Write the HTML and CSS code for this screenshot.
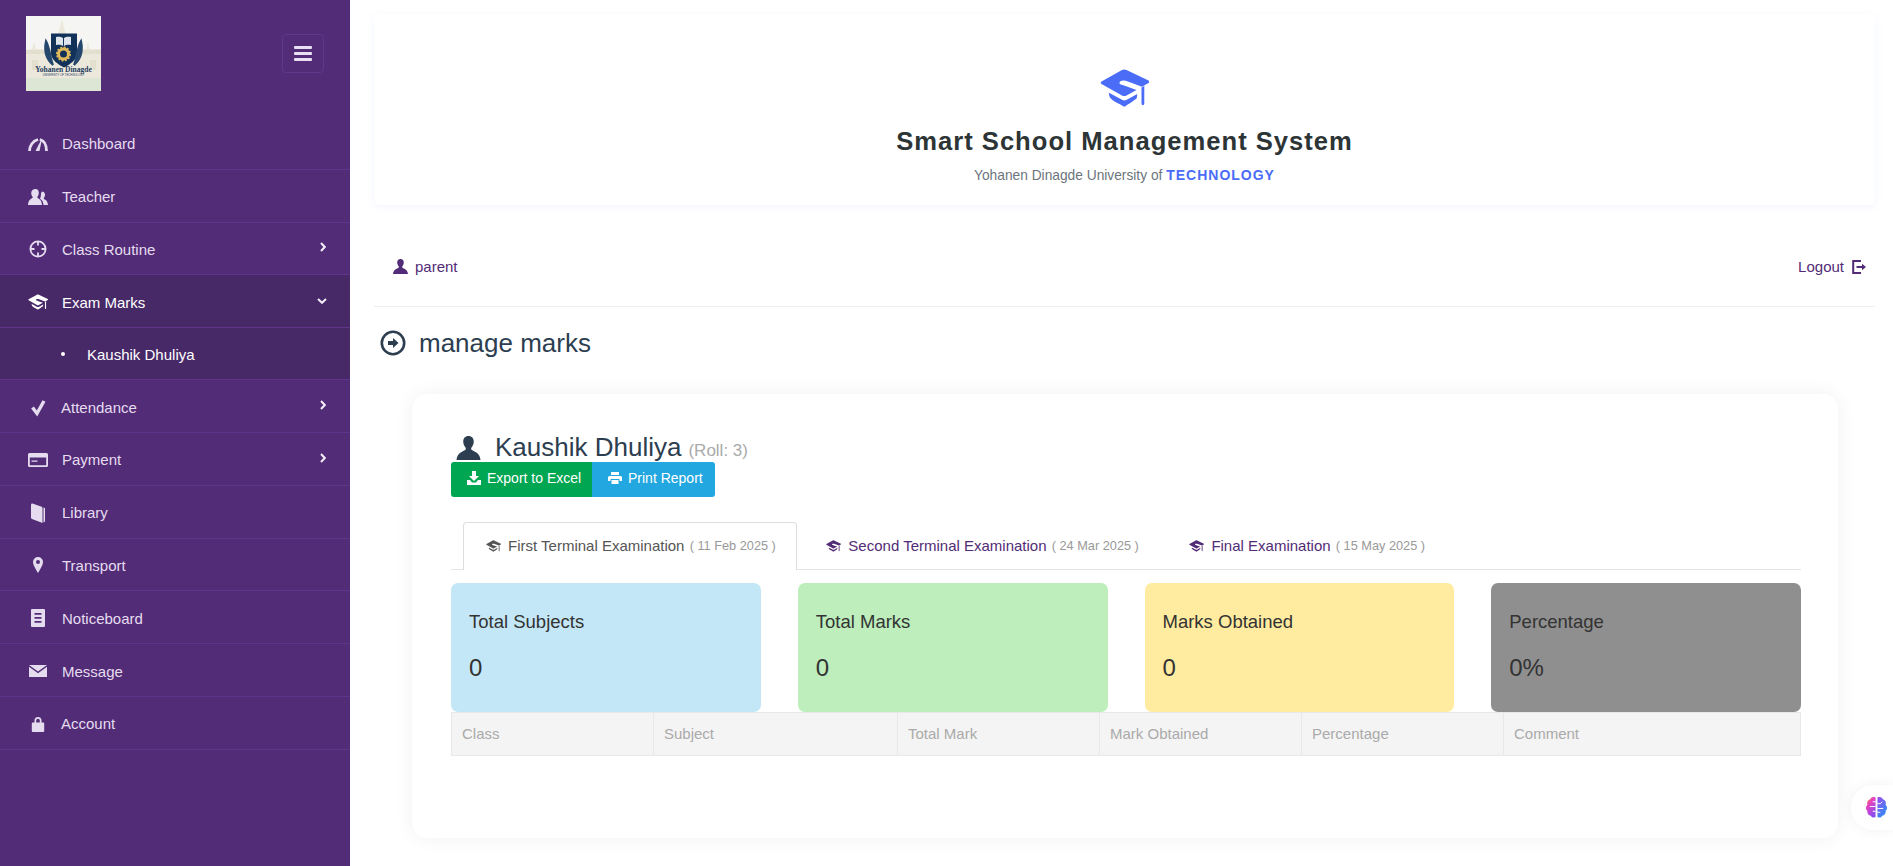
FILE: index.html
```html
<!DOCTYPE html>
<html lang="en">
<head>
  <meta charset="UTF-8" />
  <title>Manage Marks</title>
  <link rel="stylesheet" href="styles.css">
</head>
<body>
  <svg class="sprite" width="0" height="0">
    <defs>
      <symbol id="i-cap" viewBox="0 0 49 38">
        <path d="M22 1 1.500 12.500c-1 .8-1 1.700 0 2.500L22 26.500c1.500.8 3 .8 4.500 0l10-5.500-11-4c-2-.7-4-1-5.500-2-1.200-1-.3-3 2-3.300 2-.3 4 .2 6.500 1l13.500 5 6.500-3.700c1-.8 1-1.700 0-2.500L26.500 1C25 .2 23.500.2 22 1z"/>
        <path d="M8.500 23.500 22.500 31c1.300.6 2.500.6 3.800 0l11-6-.5 4c-.8 1.500-8 5.800-11 8-1 .7-2 .7-3 0-4-2.500-10-5-12.500-8-1-1.500-1.500-3.500-1.300-5.500z"/>
        <path d="M41.500 18.500l2.800-1.500v16.500c0 2-.3 2.500-1.400 2.500s-1.400-.5-1.400-2.500z"/>
      </symbol>
      <symbol id="i-user" viewBox="0 0 16 16"><path d="M8 0c2.300 0 3.500 1.600 3.500 3.700 0 1.500-.6 3-1.500 4-.3.400-.3 1.300.2 1.700C11.800 10.500 15.500 11.200 16 16H0c.5-4.800 4.200-5.500 5.800-6.600.5-.4.500-1.300.2-1.700-.9-1-1.500-2.500-1.500-4C4.500 1.600 5.700 0 8 0z"/></symbol>
      <symbol id="i-chev" viewBox="0 0 6 10"><path d="M1 1l3.800 4L1 9" fill="none" stroke="currentColor" stroke-width="2"/></symbol>
    </defs>
  </svg>

  <aside class="sidebar">
    <div class="side-head">
      <div class="logo">
        <svg viewBox="0 0 75 75" width="75" height="75">
          <rect width="75" height="75" fill="#f5f6f3"/>
          <path d="M0 34l6-1 2-7 2 7h14l6-10 3-8 3-12 3 12 3 8 6 10h12l2-7 2 7h11v33H0z" fill="#ece8db"/>
          <path d="M0 34h75v4H0zM6 44h6v10H6zM64 44h6v10h-6z" fill="#e3dfcf"/>
          <path d="M0 62h75v13H0z" fill="#dde5d5"/>
          <path d="M25 17.500h26v20c0 6-7 11-13 14-6-3-13-8-13-14z" fill="#13325a"/>
          <path d="M37 22c-2-1.500-4.500-1.500-7-1v8c2.500-.5 5-.5 7 1zM38 22c2-1.500 4.500-1.500 7-1v8c-2.500-.5-5-.5-7 1z" fill="#dfe5ec"/>
          <circle cx="37.500" cy="38" r="5" fill="none" stroke="#e0b95a" stroke-width="3"/>
          <circle cx="37.500" cy="38" r="6.700" fill="none" stroke="#e0b95a" stroke-width="1.600" stroke-dasharray="2 1.500"/>
          <path d="M20 25c-2 9 0 18 7 24-3-7-3-17-7-24zM55 25c2 9 0 18-7 24 3-7 3-17 7-24z" fill="#25476d" stroke="#25476d" stroke-width="2"/>
          <text x="37.500" y="55.500" class="logo-name">Yohanen Dinagde</text>
          <text x="37.500" y="60" class="logo-sub">UNIVERSITY OF TECHNOLOGY</text>
        </svg>
      </div>
      <button class="toggle" type="button">
        <span></span><span></span><span></span>
      </button>
    </div>

    <nav class="side-nav">
      <a class="nav-item">
        <svg class="nav-icon" viewBox="0 0 20 14"><path d="M1.500 14C1.500 9 4.500 4 10 2.500M11.800 2.500C16 3.500 18.500 8 18.500 14" fill="none" stroke="currentColor" stroke-width="2.800"/><path d="M7.500 14 12.800 3.500l.8.4L11.500 14z" fill="currentColor"/></svg>
        <span>Dashboard</span>
      </a>
      <a class="nav-item">
        <svg class="nav-icon" viewBox="0 0 20 16"><path d="M7.500 0c2.200 0 3.300 1.700 3.300 3.900 0 1.400-.6 2.900-1.300 3.700-.3.400-.2 1.100.1 1.400 1.400 1 4 1.500 4.400 7H0c.4-5.500 3-6 4.400-7 .3-.3.400-1 .1-1.400C3.800 6.800 3.200 5.300 3.200 3.900 3.200 1.700 5.300 0 7.500 0z" fill="currentColor"/><path d="M14 2.500c2 0 3 1.400 3 3.300 0 1.300-.5 2.500-1.200 3.200-.2.300-.1.900.2 1.100 1.200.8 3.600 1.400 4 5.900h-4.500c-.2-2.800-1.200-5-3.500-6.300.6-1 1-2.500 .9-4.200.3-1.800 .7-3 1.600-3z" fill="currentColor"/></svg>
        <span>Teacher</span>
      </a>
      <a class="nav-item">
        <svg class="nav-icon" viewBox="0 0 20 20"><circle cx="10" cy="10" r="7.600" fill="none" stroke="currentColor" stroke-width="1.800"/><path d="M10 2v4.500M10 13.500V18M2 10h4.500M13.500 10H18" stroke="currentColor" stroke-width="1.800"/></svg>
        <span>Class Routine</span>
        <svg class="chevron"><use href="#i-chev"/></svg>
      </a>
      <div class="nav-group">
        <a class="nav-item active">
          <svg class="nav-icon"><use href="#i-cap"/></svg>
          <span>Exam Marks</span>
          <svg class="chevron down"><use href="#i-chev"/></svg>
        </a>
        <a class="nav-sub"><i class="dot"></i><span>Kaushik Dhuliya</span></a>
      </div>
      <a class="nav-item narrow">
        <svg class="nav-icon" viewBox="0 0 20 16"><path d="M4.500 8.500 9 14.500 16 2" fill="none" stroke="currentColor" stroke-width="3.400"/></svg>
        <span>Attendance</span>
        <svg class="chevron"><use href="#i-chev"/></svg>
      </a>
      <a class="nav-item">
        <svg class="nav-icon" viewBox="0 0 20 14"><path d="M1.500 0h17A1.500 1.500 0 0 1 20 1.500v11a1.500 1.500 0 0 1-1.500 1.500h-17A1.500 1.500 0 0 1 0 12.500v-11A1.500 1.500 0 0 1 1.500 0zM1.800 4.500v7.700h16.400V4.500zM3.500 7.500h6v1.300h-6z" fill="currentColor" fill-rule="evenodd"/></svg>
        <span>Payment</span>
        <svg class="chevron"><use href="#i-chev"/></svg>
      </a>
      <a class="nav-item">
        <svg class="nav-icon" viewBox="0 0 20 20"><path d="M3 2c0-1 .6-1.700 1.500-1.500L13 3.500c1 .4 1.500 1 1.500 2V20L4 16c-.7-.3-1-.8-1-1.500z" fill="currentColor"/><path d="M15.500 4.500 17 5v13.500l-1.500 1z" fill="currentColor"/></svg>
        <span>Library</span>
      </a>
      <a class="nav-item">
        <svg class="nav-icon" viewBox="0 0 20 16"><path d="M10 0a5 5 0 0 1 5 5c0 3-3 7.500-5 11-2-3.500-5-8-5-11a5 5 0 0 1 5-5zm0 3a2 2 0 1 0 0 4 2 2 0 0 0 0-4z" fill="currentColor" fill-rule="evenodd"/></svg>
        <span>Transport</span>
      </a>
      <a class="nav-item">
        <svg class="nav-icon" viewBox="0 0 20 18"><path d="M4 0h12a1 1 0 0 1 1 1v16a1 1 0 0 1-1 1H4a1 1 0 0 1-1-1V1a1 1 0 0 1 1-1zm2.500 4v1.700h7V4zm0 4v1.700h7V8zm0 4v1.700h7V12z" fill="currentColor" fill-rule="evenodd"/></svg>
        <span>Noticeboard</span>
      </a>
      <a class="nav-item">
        <svg class="nav-icon" viewBox="0 0 20 12"><path d="M1 0h18l-9 6.500zM1 1.700v10.300h18V1.700L10 8.300z" fill="currentColor"/></svg>
        <span>Message</span>
      </a>
      <a class="nav-item narrow">
        <svg class="nav-icon" viewBox="0 0 20 16"><path d="M6.500 6.500V4.500a3.500 3.500 0 0 1 7 0v2h1.700A1 1 0 0 1 16.200 7.500v7.500a1 1 0 0 1-1 1H4.800a1 1 0 0 1-1-1V7.500a1 1 0 0 1 1-1zm1.700 0h3.600V4.500a1.800 1.800 0 0 0-3.600 0z" fill="currentColor" fill-rule="evenodd"/></svg>
        <span>Account</span>
      </a>
    </nav>
  </aside>

  <main class="content">
    <header class="brand">
      <svg class="brand-icon"><use href="#i-cap"/></svg>
      <h1>Smart School Management System</h1>
      <p>Yohanen Dinagde University of <b>TECHNOLOGY</b></p>
    </header>

    <div class="userbar">
      <a class="userlink">
        <svg class="user-icon"><use href="#i-user"/></svg>
        parent
      </a>
      <a class="userlink">
        Logout
        <svg class="logout-icon" viewBox="0 0 14 14"><path d="M9 1H1.200v12H9" fill="none" stroke="currentColor" stroke-width="2"/><path d="M4.500 6.100h5.500V3.800L14 7l-4 3.200V7.900H4.500z" fill="currentColor"/></svg>
      </a>
    </div>

    <h2 class="page-title">
      <svg class="title-icon" viewBox="0 0 26 26"><circle cx="13" cy="13" r="11.200" fill="none" stroke="currentColor" stroke-width="2.600"/><path d="M8 11h5V8l5.500 5-5.500 5v-3H8z" fill="currentColor"/></svg>
      manage marks
    </h2>

    <section class="card">
      <div class="student">
        <svg class="student-icon"><use href="#i-user"/></svg>
        <span class="student-name">Kaushik Dhuliya</span>
        <small>(Roll: 3)</small>
      </div>
      <div class="actions">
        <button class="btn btn-green" type="button">
          <svg viewBox="0 0 14 14"><path d="M5 0h4v5h3L7 10 2 5h3zM0 9h3l2 2.500h4L11 9h3v5H0z" fill="currentColor"/></svg>
          Export to Excel
        </button>
        <button class="btn btn-blue" type="button">
          <svg viewBox="0 0 14 14"><path d="M3 1h8v3H3zM1.500 5h11A1.500 1.500 0 0 1 14 6.500V10h-2.500V8h-9v2H0V6.500A1.500 1.500 0 0 1 1.500 5zM3.500 9h7v4h-7z" fill="currentColor"/></svg>
          Print Report
        </button>
      </div>

      <ul class="tabs">
        <li class="tab active"><svg class="tab-icon"><use href="#i-cap"/></svg>First Terminal Examination <small>( 11 Feb 2025 )</small></li>
        <li class="tab"><svg class="tab-icon"><use href="#i-cap"/></svg>Second Terminal Examination <small>( 24 Mar 2025 )</small></li>
        <li class="tab"><svg class="tab-icon"><use href="#i-cap"/></svg>Final Examination <small>( 15 May 2025 )</small></li>
      </ul>

      <div class="stats">
        <div class="stat stat-blue"><h4>Total Subjects</h4><p>0</p></div>
        <div class="stat stat-green"><h4>Total Marks</h4><p>0</p></div>
        <div class="stat stat-yellow"><h4>Marks Obtained</h4><p>0</p></div>
        <div class="stat stat-grey"><h4>Percentage</h4><p>0%</p></div>
      </div>

      <table class="marks">
        <colgroup>
          <col class="col-a"><col class="col-b"><col class="col-a"><col class="col-a"><col class="col-a"><col>
        </colgroup>
        <thead>
          <tr>
            <th>Class</th>
            <th>Subject</th>
            <th>Total Mark</th>
            <th>Mark Obtained</th>
            <th>Percentage</th>
            <th>Comment</th>
          </tr>
        </thead>
      </table>
    </section>
  </main>

  <div class="assist">
    <svg viewBox="0 0 24 24" width="23" height="23">
      <defs>
        <linearGradient id="brainL" x1="0" y1="0" x2=".6" y2="1"><stop offset="0" stop-color="#f59e2c"/><stop offset=".4" stop-color="#e63fc0"/><stop offset="1" stop-color="#8b4df0"/></linearGradient>
        <linearGradient id="brainR" x1="0" y1="0" x2=".6" y2="1"><stop offset="0" stop-color="#9a4df0"/><stop offset="1" stop-color="#2f8cf5"/></linearGradient>
      </defs>
      <path d="M11 1.500C8.500.5 6 1.500 5.500 3.500 3 4 1.500 6.500 2.500 9 .5 11 .5 14 2.500 15.500c-.5 3 1.500 5 3.500 5 1 2 3.500 2.500 5 1.500z" fill="url(#brainL)"/>
      <path d="M13 1.500c2.500-1 5 0 5.500 2C21 4 22.500 6.500 21.500 9c2 2 2 5 0 6.500.5 3-1.500 5-3.500 5-1 2-3.500 2.500-5 1.500z" fill="url(#brainR)"/>
      <path d="M11 11H5M11 6H8M11 16H8M13 8h3l2-2M13 13h6M13 17h3" stroke="#fff" stroke-width="1" fill="none"/>
    </svg>
  </div>
</body>
</html>
```

FILE: styles.css
```css
* {
  box-sizing: border-box;
}
body {
  margin: 0;
  height: 866px;
  overflow: hidden;
  display: flex;
  font-family: "Liberation Sans", Arial, sans-serif;
  font-size: 14px;
  color: #333;
  background: #fff;
}
.sprite {
  position: absolute;
}

/* sidebar */
.sidebar {
  width: 350px;
  flex: none;
  background: #522c76;
  color: #e5dcf0;
}
.side-head {
  height: 117px;
  padding: 16px 26px 26px;
  display: flex;
  justify-content: space-between;
  align-items: center;
}
.logo {
  width: 75px;
  height: 75px;
}
.logo svg {
  display: block;
}
.logo-name {
  font-family: "Liberation Serif", serif;
  font-size: 7.500px;
  font-weight: bold;
  fill: #1f3b5f;
  text-anchor: middle;
}
.logo-sub {
  font-family: "Liberation Sans", sans-serif;
  font-size: 2.800px;
  fill: #1f3b5f;
  text-anchor: middle;
}
.toggle {
  width: 42px;
  height: 39px;
  padding: 0;
  background: none;
  border: 1px solid #5f3889;
  border-radius: 4px;
  display: flex;
  flex-direction: column;
  align-items: center;
  justify-content: center;
  gap: 3px;
}
.toggle span {
  width: 18px;
  height: 3px;
  background: #e8e0f2;
  border-radius: 1px;
}
.nav-item {
  height: 52.8px;
  padding: 2px 24px 0 28px;
  display: flex;
  align-items: center;
  font-size: 15px;
  border-bottom: 1px solid #5e358a;
}
.nav-icon {
  width: 20px;
  height: 20px;
  margin-right: 14px;
  flex: none;
  fill: currentColor;
}
.narrow .nav-icon {
  margin-right: 13px;
}
.chevron {
  width: 6px;
  height: 10px;
  margin-left: auto;
  margin-top: -4px;
  color: #f3eef8;
}
.chevron.down {
  transform: rotate(90deg);
  margin-right: 1px;
  margin-top: -2px;
}
.nav-group {
  background: #482968;
  color: #fff;
}
.nav-sub {
  height: 52px;
  padding: 1px 0 0 61px;
  display: flex;
  align-items: center;
  font-size: 15px;
  border-bottom: 1px solid #5e358a;
}
.dot {
  width: 4px;
  height: 4px;
  border-radius: 50%;
  background: #fff;
  margin-right: 22px;
}

/* main column */
.content {
  flex: 1;
  min-width: 0;
  padding: 14px 18px 0 24px;
}
.brand {
  height: 191px;
  padding-top: 55px;
  text-align: center;
  background: #fff;
  border-radius: 6px;
  box-shadow: 0 2px 10px rgba(74, 108, 247, 0.06);
}
.brand-icon {
  display: block;
  width: 49px;
  height: 38px;
  margin: 0 auto 19px;
  fill: #4a6cf7;
}
.brand h1 {
  margin: 0;
  font-size: 25.6px;
  line-height: 30px;
  letter-spacing: 1px;
  color: #2d3436;
}
.brand p {
  margin: 11px 0 0;
  line-height: 16px;
  font-size: 13.75px;
  color: #6c757d;
}
.brand b {
  font-size: 14px;
  color: #4a6cf7;
  letter-spacing: 1px;
}
.userbar {
  height: 102px;
  padding: 22px 9px 0 19px;
  display: flex;
  justify-content: space-between;
  align-items: center;
  border-bottom: 1px solid #eee;
  font-size: 15px;
  color: #522c76;
}
.userlink {
  display: flex;
  align-items: center;
}
.user-icon {
  width: 15px;
  height: 15px;
  margin-right: 7px;
  fill: currentColor;
}
.logout-icon {
  width: 14px;
  height: 14px;
  margin-left: 8px;
}
.page-title {
  margin: 0;
  height: 72px;
  padding-left: 6px;
  display: flex;
  align-items: center;
  font-size: 26px;
  font-weight: normal;
  color: #2c3e50;
}
.title-icon {
  width: 26px;
  height: 26px;
  margin-right: 13px;
}
.card {
  height: 444px;
  margin: 15px 37px 0 38px;
  padding: 39px 37px 0 39px;
  border-radius: 15px;
  background: #fff;
  box-shadow: 0 0 20px rgba(0, 0, 0, 0.06);
}
.student {
  height: 29px;
  padding-left: 5px;
  display: flex;
  align-items: baseline;
  color: #2c3e50;
  font-size: 26px;
  line-height: 29px;
}
.student-icon {
  width: 25px;
  height: 24px;
  margin-right: 14px;
  fill: currentColor;
  align-self: center;
}
.student small {
  margin-left: 7px;
  font-size: 17px;
  color: #aaa;
}
.actions {
  display: flex;
}
.btn {
  height: 35px;
  padding: 0 0 3px 16px;
  display: flex;
  align-items: center;
  border: none;
  font-family: inherit;
  font-size: 14px;
  color: #fff;
  white-space: nowrap;
}
.btn svg {
  width: 14px;
  height: 14px;
  margin-right: 6px;
}
.btn-green {
  width: 141px;
  background: #00a651;
  border-radius: 3px 0 0 3px;
}
.btn-blue {
  width: 123px;
  background: #22a7e0;
  border-radius: 0 3px 3px 0;
}
.tabs {
  list-style: none;
  margin: 25px 0 13px;
  padding: 0 0 0 12px;
  height: 48px;
  display: flex;
  border-bottom: 1px solid #e5e5e5;
  font-size: 15px;
}
.tab {
  height: 48px;
  margin-right: 6.5px;
  padding: 0 20px 2px 22px;
  display: flex;
  align-items: center;
  white-space: pre;
  color: #522c76;
  border: 1px solid transparent;
  border-bottom: none;
}
.tab.active {
  color: #555;
  background: #fff;
  border-color: #ddd;
  border-radius: 4px 4px 0 0;
}
.tab small {
  font-size: 12.75px;
  color: #999;
  margin-left: 1px;
}
.tab-icon {
  width: 15px;
  height: 12px;
  margin-right: 7px;
  fill: currentColor;
}
.stats {
  display: grid;
  grid-template-columns: repeat(4, 1fr);
  gap: 37px;
}
.stat {
  height: 129px;
  padding: 27px 18px 0;
  border-radius: 7px;
}
.stat h4 {
  margin: 0;
  font-size: 18.5px;
  line-height: 24px;
  font-weight: normal;
}
.stat p {
  margin: 21px 0 0;
  font-size: 24px;
  line-height: 26px;
}
.stat-blue {
  background: #c4e7f7;
}
.stat-green {
  background: #bdeebc;
}
.stat-yellow {
  background: #ffeca0;
}
.stat-grey {
  background: #8f8f8f;
}
.marks {
  width: 100%;
  table-layout: fixed;
  border-collapse: collapse;
}
.col-a {
  width: 202px;
}
.col-b {
  width: 244px;
}
.marks th {
  height: 43px;
  padding: 0 10px 2px;
  text-align: left;
  font-size: 15px;
  font-weight: normal;
  color: #aaa;
  background: #f4f4f4;
  border: 1px solid #e8e8e8;
}

/* floating helper on the right edge */
.assist {
  position: absolute;
  right: 0;
  top: 785px;
  width: 42px;
  height: 45px;
  padding: 11px 0 0 14px;
  background: #fff;
  border-radius: 22px 0 0 22px;
  box-shadow: 0 0 14px rgba(0, 0, 0, 0.06);
}
.assist svg {
  display: block;
}
```
